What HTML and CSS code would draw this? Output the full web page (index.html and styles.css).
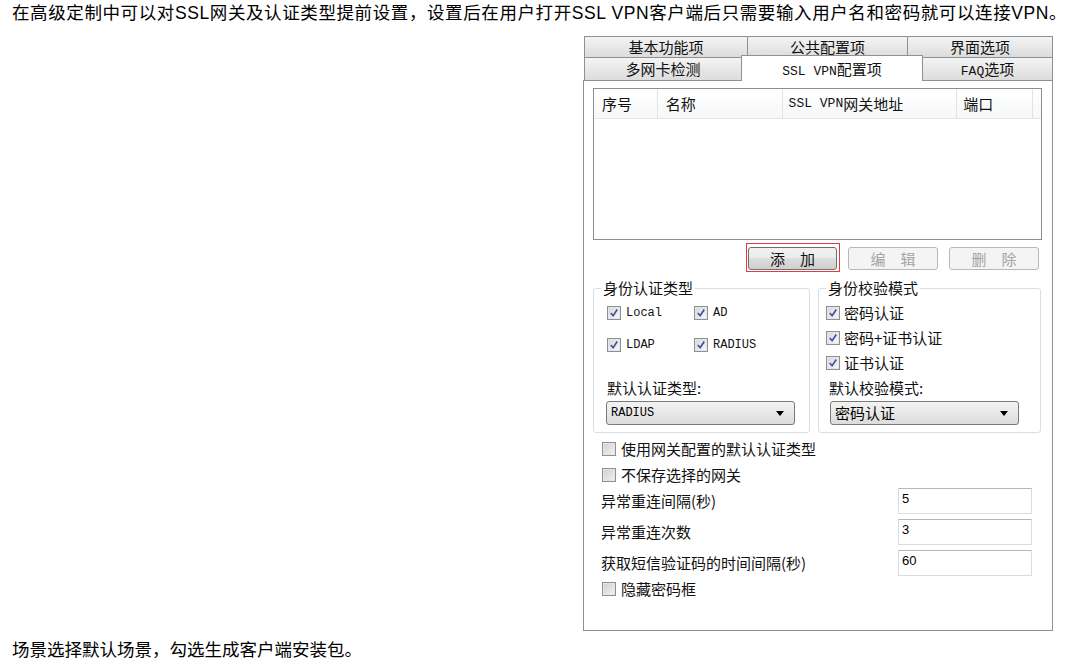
FILE: index.html
```html
<!DOCTYPE html>
<html lang="zh-CN">
<head>
<meta charset="utf-8">
<title>SSL VPN配置项</title>
<link rel="stylesheet" href="styles.css">
</head>
<body>
<p class="intro">在高级定制中可以对SSL网关及认证类型提前设置，设置后在用户打开SSL VPN客户端后只需要输入用户名和密码就可以连接VPN。</p>
<div class="figure">
  <div class="tabs">
    <div class="tab-row row1">
      <div class="tab t1">基本功能项</div>
      <div class="tab t2">公共配置项</div>
      <div class="tab t3">界面选项</div>
    </div>
    <div class="tab-row row2">
      <div class="tab t4">多网卡检测</div>
      <div class="tab active"><span class="en big">SSL VPN</span>配置项</div>
      <div class="tab t6"><span class="en big">FAQ</span>选项</div>
    </div>
  </div>
  <div class="panel">
    <div class="list">
      <div class="list-head">
        <div class="col c1">序号</div>
        <div class="col c2">名称</div>
        <div class="col c3"><span class="en big">SSL VPN</span>网关地址</div>
        <div class="col c4">端口</div>
        <div class="col c5"></div>
      </div>
    </div>
    <div class="btn-row">
      <div class="btn b1 focus">添&emsp;加</div>
      <div class="btn b2 disabled">编&emsp;辑</div>
      <div class="btn b3 disabled">删&emsp;除</div>
    </div>
    <div class="groups">
      <div class="group g1">
        <span class="legend">身份认证类型</span>
        <div class="g1grid">
          <div class="check"><span class="cb on"><svg viewBox="0 0 14 14"><path d="M3.2 7 L6 10.2 L10.8 3"/></svg></span><span class="en">Local</span></div>
          <div class="check"><span class="cb on"><svg viewBox="0 0 14 14"><path d="M3.2 7 L6 10.2 L10.8 3"/></svg></span><span class="en">AD</span></div>
          <div class="check"><span class="cb on"><svg viewBox="0 0 14 14"><path d="M3.2 7 L6 10.2 L10.8 3"/></svg></span><span class="en">LDAP</span></div>
          <div class="check"><span class="cb on"><svg viewBox="0 0 14 14"><path d="M3.2 7 L6 10.2 L10.8 3"/></svg></span><span class="en">RADIUS</span></div>
        </div>
        <div class="glabel gl1">默认认证类型:</div>
        <div class="select sel1"><span class="en">RADIUS</span><span class="arrow"></span></div>
      </div>
      <div class="group g2">
        <span class="legend">身份校验模式</span>
        <div class="g2list">
          <div class="check"><span class="cb on"><svg viewBox="0 0 14 14"><path d="M3.2 7 L6 10.2 L10.8 3"/></svg></span><span>密码认证</span></div>
          <div class="check"><span class="cb on"><svg viewBox="0 0 14 14"><path d="M3.2 7 L6 10.2 L10.8 3"/></svg></span><span>密码+证书认证</span></div>
          <div class="check"><span class="cb on"><svg viewBox="0 0 14 14"><path d="M3.2 7 L6 10.2 L10.8 3"/></svg></span><span>证书认证</span></div>
        </div>
        <div class="glabel gl2">默认校验模式:</div>
        <div class="select sel2"><span>密码认证</span><span class="arrow"></span></div>
      </div>
    </div>
    <div class="check opt o1"><span class="cb"></span><span>使用网关配置的默认认证类型</span></div>
    <div class="check opt o2"><span class="cb"></span><span>不保存选择的网关</span></div>
    <div class="field f1"><span class="flabel">异常重连间隔(秒)</span><span class="input">5</span></div>
    <div class="field f2"><span class="flabel">异常重连次数</span><span class="input">3</span></div>
    <div class="field f3"><span class="flabel">获取短信验证码的时间间隔(秒)</span><span class="input">60</span></div>
    <div class="check opt o3"><span class="cb"></span><span>隐藏密码框</span></div>
  </div>
</div>
<p class="outro">场景选择默认场景，勾选生成客户端安装包。</p>
</body>
</html>
```
FILE: styles.css
```css
html, body {
  margin: 0;
  padding: 0;
  background: #fff;
}
body {
  font-family: "Liberation Sans", "Noto Sans CJK SC", sans-serif;
  color: #000;
  overflow: hidden;
}
.intro {
  margin: 0;
  height: 33px;
  padding-left: 12px;
  font-size: 17.5px;
  letter-spacing: 0.6px;
  line-height: 27px;
  white-space: nowrap;
}
.outro {
  margin: 0;
  padding: 4px 0 0 12px;
  font-size: 17.5px;
  line-height: 30px;
  white-space: nowrap;
}
.figure {
  margin-left: 583px;
  width: 470px;
  height: 598px;
  display: flex;
  flex-direction: column;
  font-family: "Noto Sans CJK SC", sans-serif;
  font-size: 15px;
  line-height: 20px;
  color: #111;
}
.en {
  font-family: "Liberation Mono", monospace;
  font-size: 12px;
}
.en.big { font-size: 13px; }

/* tabs */
.tabs {
  height: 47px;
  padding-top: 3px;
  box-sizing: border-box;
  flex: none;
}
.tab-row {
  display: flex;
  margin-left: 1px;
}
.row1 { height: 21px; }
.row2 { height: 23px; }
.tab {
  box-sizing: border-box;
  border: 1px solid #8d9196;
  border-bottom: none;
  background: linear-gradient(#f4f4f4, #dcdcdc);
  text-align: center;
  line-height: 19px;
  white-space: nowrap;
}
.row1 .tab { height: 21px; }
.row2 .tab { height: 23px; line-height: 22px; }
.t1 { width: 164px; }
.t2 { width: 161px; margin-left: -1px; }
.t3 { width: 146px; margin-left: -1px; }
.t4 { width: 158px; }
.row2 .active {
  width: 182px;
  margin-left: -1px;
  margin-top: -2px;
  height: 26px;
  padding-top: 2px;
  background: #fff;
  position: relative;
  z-index: 1;
}
.t6 { width: 131px; margin-left: -1px; }

/* panel */
.panel {
  flex: 1;
  box-sizing: border-box;
  border: 1px solid #8d9196;
  background: #fff;
  padding: 7px 0 0 9px;
  display: flex;
  flex-direction: column;
  align-items: flex-start;
}
.list {
  box-sizing: border-box;
  width: 449px;
  height: 152px;
  border: 1px solid #8a8e95;
  flex: none;
}
.list-head {
  display: flex;
  height: 30px;
  box-sizing: border-box;
  border-bottom: 1px solid #e3e6ea;
  background: linear-gradient(#ffffff, #f6f7f9);
}
.col {
  box-sizing: border-box;
  border-right: 1px solid #e1e3e6;
  padding-left: 8px;
  display: flex;
  align-items: center;
  white-space: nowrap;
}
.c1 { width: 64px; }
.c2 { width: 125px; }
.c3 { width: 175px; padding-left: 6px; }
.c4 { width: 76px; padding-left: 6px; }
.c5 { flex: 1; border-right: none; }

/* buttons */
.btn-row {
  display: flex;
  justify-content: flex-end;
  gap: 11px;
  margin-top: 7px;
  align-self: stretch;
  padding-right: 13px;
  height: 23px;
  flex: none;
}
.btn {
  box-sizing: border-box;
  height: 23px;
  border: 1px solid #707070;
  border-radius: 3px;
  background: linear-gradient(#f2f2f2 0, #ebebeb 50%, #dddddd 50%, #cfcfcf 100%);
  text-align: center;
  line-height: 21px;
}
.b1 { width: 89px; }
.b2, .b3 { width: 90px; }
.btn.disabled {
  border-color: #b5b9bc;
  background: #f4f4f4;
  color: #a3a3a3;
}
.btn.focus {
  position: relative;
}
.btn.focus::after {
  content: "";
  position: absolute;
  left: -3px;
  top: -5px;
  right: -4px;
  bottom: -3px;
  border: 1px solid #e5393b;
}

/* groups */
.groups {
  display: flex;
  gap: 8px;
  margin-top: 18px;
  flex: none;
}
.group {
  box-sizing: border-box;
  border: 1px solid #d5dfe5;
  border-radius: 3px;
  height: 145px;
}
.g1 { width: 217px; }
.g2 { width: 223px; }
.legend {
  display: block;
  width: fit-content;
  margin: -11px 0 0 7px;
  padding: 0 2px;
  background: #fff;
  line-height: 20px;
  white-space: nowrap;
}
.check {
  display: flex;
  align-items: center;
  height: 20px;
  gap: 5px;
  white-space: nowrap;
}
.cb {
  box-sizing: border-box;
  width: 14px;
  height: 14px;
  border: 1px solid #8f8f8f;
  background: linear-gradient(135deg, #cfcfcf, #f3f3f3);
  box-shadow: inset 0 0 0 1px #e6e6e6;
  display: inline-flex;
  align-items: center;
  justify-content: center;
  flex: none;
}
.cb.on {
  background: linear-gradient(135deg, #d8d8d8, #f8f8f8);
}
.cb svg {
  width: 12px;
  height: 12px;
  fill: none;
  stroke: #3a4ea6;
  stroke-width: 1.9;
}
.g1grid {
  display: grid;
  grid-template-columns: 87px auto;
  row-gap: 12px;
  margin: 5px 0 0 13px;
}
.g2list {
  display: flex;
  flex-direction: column;
  gap: 5px;
  margin: 5px 0 0 7px;
}
.g2list .check { gap: 4px; }
.glabel { white-space: nowrap; }
.gl1 { margin: 23px 0 0 13px; }
.gl2 { margin: 5px 0 0 10px; }
.select {
  box-sizing: border-box;
  width: 189px;
  height: 24px;
  border: 1px solid #7a7a7a;
  border-radius: 3px;
  background: linear-gradient(#f3f3f3, #dcdcdc);
  display: flex;
  align-items: center;
  justify-content: space-between;
  padding: 0 10px 0 4px;
  color: #000;
}
.sel1 { margin: 3px 0 0 12px; }
.sel2 { margin: 3px 0 0 11px; }
.arrow {
  width: 0;
  height: 0;
  border-left: 4px solid transparent;
  border-right: 4px solid transparent;
  border-top: 5px solid #000;
}

/* options below */
.opt { margin-left: 9px; }
.o1 { margin-top: 6px; }
.o2 { margin-top: 6px; }
.o3 { margin-top: 3px; }
.field {
  display: flex;
  align-items: center;
  height: 26px;
  margin-left: 8px;
  margin-top: 5px;
}
.f1 { margin-top: 3px; }
.flabel {
  width: 297px;
  white-space: nowrap;
}
.input {
  box-sizing: border-box;
  width: 134px;
  height: 26px;
  border: 1px solid #d9dde2;
  border-top-color: #b4b7bc;
  background: #fff;
  font-family: "Liberation Sans", sans-serif;
  font-size: 13px;
  line-height: 18px;
  padding: 1px 0 0 3px;
  color: #000;
  align-self: flex-start;
}
```
